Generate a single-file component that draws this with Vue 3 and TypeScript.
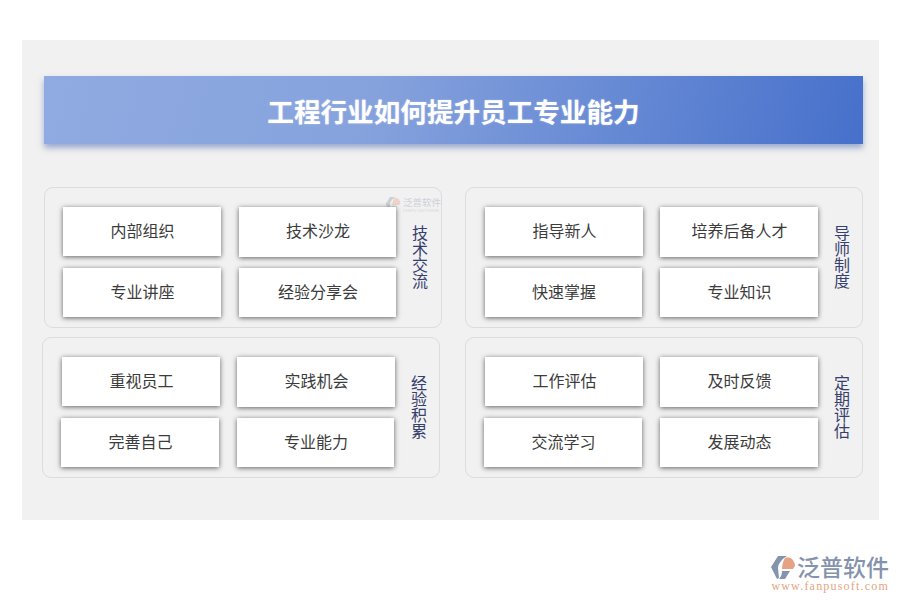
<script setup lang="ts">
interface Box { text: string; cls?: string }
interface Group { label: string; cls?: string; watermark?: boolean; boxes: Box[] }
const groups: Group[] = [
  { label: '技术交流', cls: 'first', watermark: true, boxes: [
    { text: '内部组织' }, { text: '技术沙龙', cls: 'tall narrow' },
    { text: '专业讲座' }, { text: '经验分享会', cls: 'narrow' } ] },
  { label: '导师制度', boxes: [
    { text: '指导新人' }, { text: '培养后备人才', cls: 'tall' },
    { text: '快速掌握', cls: 'narrow' }, { text: '专业知识' } ] },
  { label: '经验积累', cls: 'left', boxes: [
    { text: '重视员工' }, { text: '实践机会', cls: 'tall' },
    { text: '完善自己', cls: 'shift' }, { text: '专业能力', cls: 'narrow' } ] },
  { label: '定期评估', boxes: [
    { text: '工作评估' }, { text: '及时反馈', cls: 'tall' },
    { text: '交流学习', cls: 'shift' }, { text: '发展动态' } ] },
]
</script>

<template>
  <div class="page">
    <section class="panel">
      <header class="banner">工程行业如何提升员工专业能力</header>
      <div class="groups">
        <div v-for="g in groups" :key="g.label" class="group" :class="g.cls">
          <div v-if="g.watermark" class="watermark">
            <svg class="wm-icon" viewBox="0 0 26 24" width="16" height="15">
              <path d="M8 0h9C12 3 8 8 8 12l1 10-2 1-6-12z" fill="#8a96a8" />
              <path d="M15 2c3-1 6 0 7 1 2 2 3 5 3 7l-2 3H12c0-4 1-8 3-11z" fill="#e5a384" />
              <path d="M12 15h8l-5 8H9c2-2 3-5 3-8z" fill="#8a96a8" />
            </svg>
            <div class="wm-text">
              <span class="wm-name">泛普软件</span>
              <span class="wm-sub">FANPU SOFTWARE</span>
            </div>
          </div>
          <div class="grid">
            <div v-for="b in g.boxes" :key="b.text" class="box" :class="b.cls">{{ b.text }}</div>
          </div>
          <div class="label">{{ g.label }}</div>
        </div>
      </div>
    </section>
    <footer class="logo">
      <div class="logo-row">
        <svg class="logo-icon" viewBox="0 0 26 24" width="26" height="24">
          <path d="M8 0h9C12 3 8 8 8 12l1 10-2 1-6-12z" fill="#8494ad" />
          <path d="M15 2c3-1 6 0 7 1 2 2 3 5 3 7l-2 3H12c0-4 1-8 3-11z" fill="#e5a384" />
          <path d="M12 15h8l-5 8H9c2-2 3-5 3-8z" fill="#8494ad" />
        </svg>
        <span class="logo-name">泛普软件</span>
      </div>
      <span class="logo-url">www.fanpusoft.com</span>
    </footer>
  </div>
</template>

<style>
html, body { margin: 0; background: #fff; }
</style>

<style scoped>
.page {
  width: 900px;
  height: 600px;
  padding-top: 40px;
  box-sizing: border-box;
  font-family: "Noto Sans CJK SC", "Liberation Sans", sans-serif;
  overflow: hidden;
}
.panel {
  margin-left: 22px;
  width: 857px;
  height: 480px;
  box-sizing: border-box;
  padding: 36px 16px 0 22px;
  background: #f1f1f1;
}
.banner {
  height: 68px;
  display: flex;
  align-items: center;
  justify-content: center;
  background: linear-gradient(105deg, #90abe1 0%, #86a2dd 40%, #4670cb 100%);
  box-shadow: 0 4px 6px rgba(70, 100, 170, 0.5);
  color: #fff;
  font-size: 26.6px;
  font-weight: 700;
  text-shadow: 0 0 2px rgba(255, 255, 255, 0.4);
}
.groups {
  margin-top: 43px;
  display: grid;
  grid-template-columns: 398px 398px;
  grid-auto-rows: 141px;
  column-gap: 23px;
  row-gap: 9px;
}
.group {
  position: relative;
  box-sizing: border-box;
  border: 1px solid #dcdcdc;
  border-radius: 9px;
  padding: 19px 0 0 19px;
  display: flex;
}
.group.first { padding-left: 18px; }
.group.left { margin-left: -2px; margin-right: 2px; }
.grid {
  position: relative;
  display: grid;
  grid-template-columns: 158px 158px;
  grid-template-rows: 50px 50px;
  column-gap: 17px;
  row-gap: 11px;
  align-items: start;
}
.group.first .grid { column-gap: 18px; grid-template-columns: 158px 157px; }
.box {
  height: 49px;
  box-sizing: border-box;
  padding: 0 0 4px 1px;
  background: #fff;
  box-shadow: 0 1px 5px rgba(0, 0, 0, 0.6);
  display: flex;
  align-items: center;
  justify-content: center;
  font-size: 16px;
  color: #3c3c3c;
}
.box.tall { height: 50px; }
.box.shift { margin-left: -1px; margin-right: 1px; }
.box.narrow { width: 157px; }
.label {
  width: 16px;
  margin: 17px 0 0 16px;
  font-size: 16px;
  line-height: 16px;
  color: #36406e;
  word-break: break-all;
}
.watermark {
  position: absolute;
  top: 9px;
  right: 0;
  display: flex;
  align-items: flex-start;
  gap: 2px;
  opacity: 0.35;
}
.wm-text { display: flex; flex-direction: column; width: 38px; }
.wm-name { font-size: 9.5px; line-height: 11px; color: #8a96a8; white-space: nowrap; }
.wm-sub { font-size: 4px; line-height: 4px; letter-spacing: 0.15px; color: #9aa4b4; white-space: nowrap; }
.logo {
  margin: 33px 11px 0 0;
  display: flex;
  flex-direction: column;
  align-items: flex-end;
}
.logo-row { display: flex; align-items: flex-start; gap: 1px; }
.logo-icon { margin-top: 3px; }
.logo-name {
  font-size: 23px;
  line-height: 26px;
  color: #8493ac;
  font-weight: 500;
  white-space: nowrap;
}
.logo-url {
  font-family: "Liberation Serif", serif;
  font-size: 12px;
  line-height: 12px;
  letter-spacing: 1.2px;
  color: #e3a583;
  white-space: nowrap;
}
</style>
